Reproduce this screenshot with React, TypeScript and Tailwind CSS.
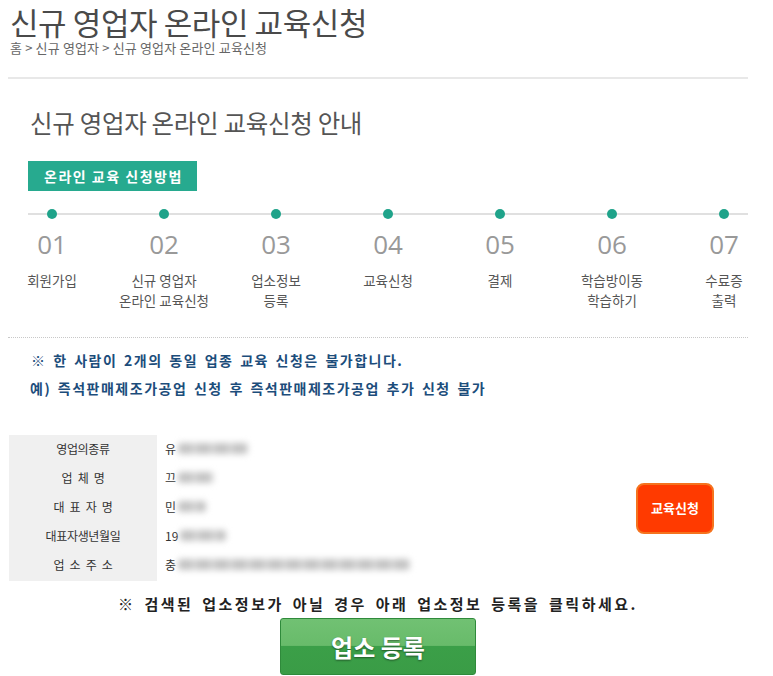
import React from "react";

const steps: { n: string; lines: string[] }[] = [
  { n: "01", lines: ["회원가입"] },
  { n: "02", lines: ["신규 영업자", "온라인 교육신청"] },
  { n: "03", lines: ["업소정보", "등록"] },
  { n: "04", lines: ["교육신청"] },
  { n: "05", lines: ["결제"] },
  { n: "06", lines: ["학습방이동", "학습하기"] },
  { n: "07", lines: ["수료증", "출력"] },
];

const rows: { label: string; first: string; w: number }[] = [
  { label: "영업의종류", first: "유", w: 70 },
  { label: "업 체 명", first: "끄", w: 36 },
  { label: "대 표 자 명", first: "민", w: 28 },
  { label: "대표자생년월일", first: "19", w: 46 },
  { label: "업 소 주 소", first: "충", w: 232 },
];

export default function App() {
  return (
    <div className="w-[773px] h-[676px] overflow-hidden bg-white font-['Noto_Sans_CJK_KR','Noto_Sans',sans-serif]">
      <div className="pl-[10px] pt-[3px]">
        <h1 className="text-[31px] leading-[37px] text-[#4a4a4a] font-normal tracking-[-0.4px]">
          신규 영업자 온라인 교육신청
        </h1>
        <div className="text-[13px] leading-[16px] text-[#666] tracking-[0.15px]">
          홈 &gt; 신규 영업자 &gt; 신규 영업자 온라인 교육신청
        </div>
      </div>

      <div className="ml-[8px] w-[740px] mt-[21px] h-[2px] bg-[#e8e8e8]" />

      <div className="ml-[30px] mt-[29px] text-[24.5px] leading-[30px] text-[#555] tracking-[-0.3px]">
        신규 영업자 온라인 교육신청 안내
      </div>

      <div className="ml-[28px] mt-[23px] w-[169px] h-[30px] bg-[#27aa8f] flex items-center pl-[16px] text-white text-[14px] font-bold tracking-[1.5px]">
        온라인 교육 신청방법
      </div>

      <div className="relative ml-[28px] w-[720px] h-[10px] mt-[18px] flex items-center gap-[102px] pl-[19px]">
        <div className="absolute left-0 right-0 top-[4px] h-[2px] bg-[#e0e0e0]" />
        {steps.map((s) => (
          <div key={s.n} className="relative w-[10px] h-[10px] rounded-full bg-[#1fa38a]" />
        ))}
      </div>

      <div className="ml-[-4px] flex">
        {steps.map((s) => (
          <div key={s.n} className="w-[112px] shrink-0 flex flex-col items-center">
            <div className="mt-[10px] text-[26px] leading-[30px] text-[#999] font-['Open_Sans',sans-serif]">
              {s.n}
            </div>
            <div className="mt-[11px] text-[13.5px] leading-[20px] text-[#555] text-center">
              {s.lines.map((l) => (
                <div key={l}>{l}</div>
              ))}
            </div>
          </div>
        ))}
      </div>

      <div className="ml-[8px] w-[740px] mt-[27px] border-t border-dotted border-[#c8c8c8]" />

      <div className="ml-[30px] mt-[8px] text-[14px] leading-[28px] font-bold text-[#1c4d7b] tracking-[1.5px] [word-spacing:2px]">
        <div className="pl-[1px]">※ 한 사람이 2개의 동일 업종 교육 신청은 불가합니다.</div>
        <div>예) 즉석판매제조가공업 신청 후 즉석판매제조가공업 추가 신청 불가</div>
      </div>

      <div className="ml-[9px] w-[739px] mt-[33px] flex items-center">
        <div className="w-[148px] h-[146px] bg-[#f0f0f0] shrink-0">
          {rows.map((r) => (
            <div
              key={r.label}
              className="h-[29px] first:mt-[-1px] flex items-center justify-center text-[12px] text-[#333] tracking-[-0.3px] [word-spacing:3px]"
            >
              {r.label}
            </div>
          ))}
        </div>
        <div className="flex-1 h-[146px] pl-[8px]">
          {rows.map((r) => (
            <div key={r.label} className="h-[29px] first:mt-[-1px] flex items-center text-[12px] text-[#333]">
              <span>{r.first}</span>
              <div
                className="ml-[2px] h-[11px] rounded-[3px] blur-[3px] bg-[repeating-linear-gradient(90deg,#c4c4c4_0px,#c4c4c4_14px,#e2e2e2_16px,#e2e2e2_18px)]"
                style={{ width: r.w }}
              />
            </div>
          ))}
        </div>
        <button className="mr-[34px] w-[78px] h-[51px] rounded-[8px] bg-[#ff3a00] border-2 border-[#f5731e] text-white text-[13px] font-bold flex items-center justify-center">
          교육신청
        </button>
      </div>

      <div className="ml-[8px] w-[740px] flex flex-col items-center">
        <div className="mt-[12px] text-[15px] leading-[22px] font-bold text-[#222] tracking-[2.5px] [word-spacing:3px]">
          ※ 검색된 업소정보가 아닐 경우 아래 업소정보 등록을 클릭하세요.
        </div>
        <button className="mt-[3px] w-[196px] h-[57px] rounded-[3px] border border-[#2f8a3b] bg-[linear-gradient(to_bottom,#71c173_0%,#68bb6a_48%,#3b9f48_50%,#3a9c46_100%)] text-white text-[24px] font-bold flex items-center justify-center [text-shadow:0_1px_2px_rgba(0,0,0,0.45)]">
          업소 등록
        </button>
      </div>
    </div>
  );
}
